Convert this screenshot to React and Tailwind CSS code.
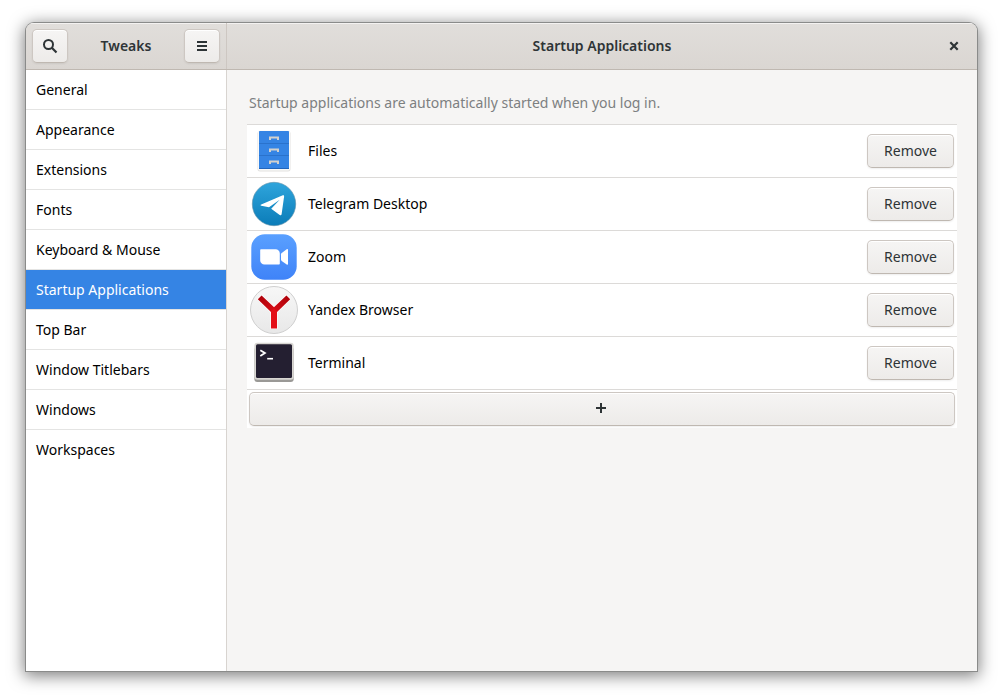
import React, { useState } from "react";

function FilesIcon() {
  return (
    <svg viewBox="0 0 48 48" className="size-12 shrink-0" aria-hidden="true">
      <rect x="7.500" y="4" width="33" height="40.500" rx="2.500" fill="#e3e2e0" />
      <rect x="8" y="3.500" width="32" height="40" rx="2" fill="#f9f9f8" />
      <rect x="9" y="4" width="30" height="38" rx="0.800" fill="#3584e4" />
      <path d="M9 16.500h30M9 28.500h30" stroke="#2a72cc" />
      <path d="M9 41.500h30" stroke="#2266bd" />
      <g fill="none" stroke="#d3d1cd" strokeWidth="2">
        <path d="M20 13v-2.500h8V13" />
        <path d="M20 25v-2.500h8V25" />
        <path d="M20 37v-2.500h8V37" />
      </g>
    </svg>
  );
}

function TelegramIcon() {
  return (
    <svg viewBox="0 0 48 48" className="size-12 shrink-0" aria-hidden="true">
      <defs>
        <linearGradient id="telegram" x1="0" y1="0" x2="0" y2="1">
          <stop offset="0" stopColor="#2fa5dc" />
          <stop offset="1" stopColor="#0b7cb8" />
        </linearGradient>
      </defs>
      <circle cx="24" cy="24" r="21.700" fill="url(#telegram)" stroke="#5e8fa8" strokeWidth="0.600" />
      <path
        d="M11.200 24.400 32.800 15.300c.9-.3 1.500.2 1.300 1.200l-2.500 17.800c-.2 1.100-1.100 1.300-1.900.7l-8.500-6.300 8.500-8.900-10.700 7.500-7.700-1.600c-.9-.2-1-.9-.1-1.300z"
        fill="#fff"
      />
    </svg>
  );
}

function ZoomIcon() {
  return (
    <svg viewBox="0 0 48 48" className="size-12 shrink-0" aria-hidden="true">
      <defs>
        <linearGradient id="zoom" x1="0" y1="0" x2="0" y2="1">
          <stop offset="0" stopColor="#5aa0ff" />
          <stop offset="1" stopColor="#3f83f8" />
        </linearGradient>
      </defs>
      <rect x="1.300" y="1.300" width="45.400" height="45.400" rx="13.500" fill="url(#zoom)" />
      <path
        d="M11 16.200h14.600a4.200 4.200 0 0 1 4.200 4.200v10.400a.8.800 0 0 1-.8.800H14.400a4.200 4.200 0 0 1-4.200-4.200V17a.8.800 0 0 1 .8-.8z"
        fill="#fff"
      />
      <path d="M31 21.200c0-.6.300-1 .7-1.300l5-3.600c.7-.5 1.300-.2 1.300.6v14c0 .8-.6 1.100-1.300.6l-5-3.600c-.4-.3-.7-.7-.7-1.300z" fill="#fff" />
    </svg>
  );
}

function YandexIcon() {
  return (
    <svg viewBox="0 0 48 48" className="size-12 shrink-0" aria-hidden="true">
      <defs>
        <linearGradient id="yandex-disc" x1="0" y1="0" x2="0" y2="1">
          <stop offset="0" stopColor="#f7f7f7" />
          <stop offset="1" stopColor="#e8e8e8" />
        </linearGradient>
        <linearGradient id="yandex-left" x1="0" y1="0" x2="1" y2="1">
          <stop offset="0" stopColor="#a90008" />
          <stop offset="1" stopColor="#e0101a" />
        </linearGradient>
        <linearGradient id="yandex-right" x1="1" y1="0" x2="0" y2="1">
          <stop offset="0" stopColor="#a90008" />
          <stop offset="1" stopColor="#e0101a" />
        </linearGradient>
      </defs>
      <circle cx="24" cy="24" r="23.500" fill="url(#yandex-disc)" stroke="#cfcfcf" />
      <g stroke="#fff" strokeWidth="1.200" strokeLinejoin="round" fill="#fff">
        <path d="M7.800 13.200 11.600 9.500 24 21l12.400-11.500 3.800 3.700L27 26v16.500h-6V26z" />
      </g>
      <path d="M7.800 13.200 11.600 9.500 27 24v4h-4z" fill="url(#yandex-left)" />
      <path d="M40.200 13.200 36.400 9.500 21 24v4h4z" fill="url(#yandex-right)" />
      <path d="M21 25.500 24 22.500l3 3V42.500h-6z" fill="#e40f17" />
    </svg>
  );
}

function TerminalIcon() {
  return (
    <svg viewBox="0 0 48 48" className="size-12 shrink-0" aria-hidden="true">
      <rect x="4.300" y="8" width="39.400" height="35" rx="3" fill="#9a9996" />
      <rect x="4.300" y="3.800" width="39.400" height="37" rx="3" fill="#d8d6d2" />
      <rect x="6" y="5.200" width="36" height="33.800" rx="1.500" fill="#241f31" />
      <path d="m10.300 11.300 4.600 2.800-4.600 2.800" fill="none" stroke="#fff" strokeWidth="1.800" />
      <path d="M17.200 19.700H23" stroke="#fff" strokeWidth="1.600" />
    </svg>
  );
}

const categories = [
  "General",
  "Appearance",
  "Extensions",
  "Fonts",
  "Keyboard & Mouse",
  "Startup Applications",
  "Top Bar",
  "Window Titlebars",
  "Windows",
  "Workspaces",
];

const startupApps = [
  { name: "Files", Icon: FilesIcon },
  { name: "Telegram Desktop", Icon: TelegramIcon },
  { name: "Zoom", Icon: ZoomIcon },
  { name: "Yandex Browser", Icon: YandexIcon },
  { name: "Terminal", Icon: TerminalIcon },
];

const buttonLook =
  "flex items-center justify-center rounded-[5px] border border-[#cdc7c2] border-b-[#bfb8b1] bg-linear-to-b from-[#f6f5f4] to-[#edebe9] text-[#2e3436] shadow-[inset_0_1px_#ffffff,0_1px_2px_#00000012] active:from-[#d6d1cd] active:to-[#d6d1cd]";

export default function App() {
  const [selected, setSelected] = useState("Startup Applications");
  const [apps, setApps] = useState(startupApps);

  return (
    <div className="flex min-h-screen bg-white px-[26px] pt-[23px] pb-[29px] font-['Noto_Sans','Open_Sans',sans-serif] text-sm text-black">
      <div className="flex flex-1 flex-col overflow-hidden rounded-t-lg bg-[#f6f5f4] shadow-[0_0_0_1px_#8a8b8a,0_3px_16px_2px_#00000080]">
        <header className="flex h-[47px] shrink-0 border-b border-[#bfb8b1] bg-linear-to-b from-[#e1dedb] to-[#dad6d2] text-[#2e3436] shadow-[inset_0_1px_#f4f2f1]">
          <div className="flex w-[201px] shrink-0 items-center justify-between border-r border-[#cdc7c2] px-1.5">
            <button type="button" aria-label="Search" className={`${buttonLook} h-[34px] w-9`}>
              <svg viewBox="0 0 16 16" className="size-4" fill="none" stroke="currentColor" aria-hidden="true">
                <circle cx="6.500" cy="6.500" r="4.500" strokeWidth="2" />
                <path d="m9.800 9.800 4.700 4.700" strokeWidth="2.200" />
              </svg>
            </button>
            <h1 className="font-semibold">Tweaks</h1>
            <button type="button" aria-label="Menu" className={`${buttonLook} h-[34px] w-9`}>
              <svg viewBox="0 0 16 16" className="size-4" fill="currentColor" aria-hidden="true">
                <path d="M3 3h10v2H3zM3 7h10v2H3zM3 11h10v2H3z" />
              </svg>
            </button>
          </div>
          <div className="grid flex-1 grid-cols-[34px_1fr_34px] items-center px-1.5">
            <h2 className="col-start-2 text-center font-semibold">{selected}</h2>
            <button type="button" aria-label="Close" className="flex h-[34px] items-center justify-center">
              <svg viewBox="0 0 16 16" className="size-4" fill="none" stroke="currentColor" strokeWidth="2.200" aria-hidden="true">
                <path d="m4.300 4.300 7.400 7.400M11.700 4.300l-7.400 7.400" />
              </svg>
            </button>
          </div>
        </header>

        <div className="flex flex-1">
          <nav className="w-[201px] shrink-0 border-r border-[#d8d4d0] bg-white">
            <ul>
              {categories.map((name, index) => (
                <li key={name} className={index < categories.length - 1 ? "border-b border-[#e4e4e3]" : ""}>
                  <button
                    type="button"
                    aria-current={name === selected ? "page" : undefined}
                    onClick={() => setSelected(name)}
                    className={`h-[39px] w-full px-2.5 text-left ${name === selected ? "bg-[#3584e4] text-white" : ""}`}
                  >
                    {name}
                  </button>
                </li>
              ))}
            </ul>
          </nav>

          <main className="min-w-0 flex-1 px-5 pt-[23px]">
            <p className="pb-[11px] pl-0.5 text-[#7d8081]">
              Startup applications are automatically started when you log in.
            </p>
            <ul className="border-t border-[#dcdad8] bg-white">
              {apps.map(({ name, Icon }) => (
                <li key={name} className="flex h-[53px] items-center gap-2.5 border-b border-[#dcdad8] px-[3px]">
                  <Icon />
                  <span className="flex-1">{name}</span>
                  <button
                    type="button"
                    aria-label={`Remove ${name}`}
                    onClick={() => setApps(apps.filter((app) => app.name !== name))}
                    className={`${buttonLook} h-[34px] px-4`}
                  >
                    Remove
                  </button>
                </li>
              ))}
              <li className="p-0.5">
                <button type="button" aria-label="Add application" className={`${buttonLook} h-[34px] w-full`}>
                  <svg viewBox="0 0 16 16" className="size-4" fill="currentColor" aria-hidden="true">
                    <path d="M6 2h2v4h4v2H8v4H6V8H2V6h4z" />
                  </svg>
                </button>
              </li>
            </ul>
          </main>
        </div>
      </div>
    </div>
  );
}
